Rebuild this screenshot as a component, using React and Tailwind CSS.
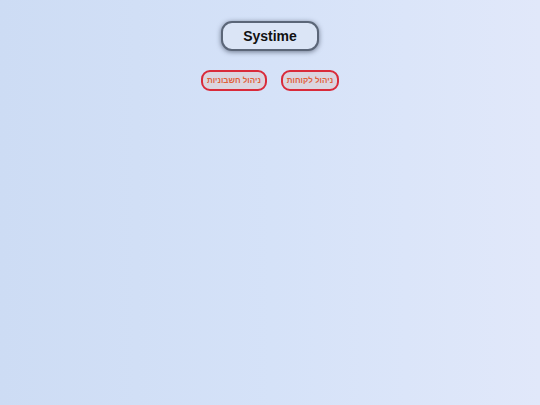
import React from 'react';

const navItems = ['ניהול לקוחות', 'ניהול חשבוניות'];

const App = () => {
    return (
        <div
            dir="rtl"
            className="flex min-h-[405px] flex-col items-center bg-gradient-to-r from-[#cddcf4] via-[#d5e2f8] to-[#e1e8fa] font-['Liberation_Sans',Arial,sans-serif]"
        >
            <h1 className="mt-[21px] flex h-[30px] w-[98px] items-center justify-center rounded-[11px] border-2 border-[#5b6678] bg-[#dbe5f6] text-[14px] font-bold text-[#111] shadow-[0_1px_5px_rgba(40,50,70,0.6)]">
                Systime
            </h1>
            <div className="mt-[19px] flex gap-[14px]">
                {navItems.map((label) => (
                    <button
                        key={label}
                        type="button"
                        className="flex h-[21px] items-center rounded-[9px] border-2 border-[#d92a3a] bg-[#dbd5df] px-[4px] text-[8px] font-bold text-[#e0603a]"
                    >
                        {label}
                    </button>
                ))}
            </div>
        </div>
    );
};

export default App;
